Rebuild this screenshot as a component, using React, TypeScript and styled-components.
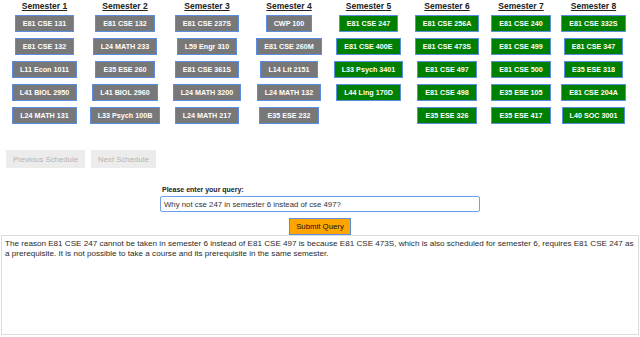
import styled, { createGlobalStyle } from 'styled-components'

const GlobalStyle = createGlobalStyle`
  html, body {
    margin: 0;
    padding: 0;
    background: #ffffff;
  }
  body {
    font-family: "Liberation Sans", Arial, Helvetica, sans-serif;
    color: #222;
  }
`

const semesters: { name: string; status: 'done' | 'planned'; courses: string[] }[] = [
  { name: 'Semester 1', status: 'done', courses: ['E81 CSE 131', 'E81 CSE 132', 'L11 Econ 1011', 'L41 BIOL 2950', 'L24 MATH 131'] },
  { name: 'Semester 2', status: 'done', courses: ['E81 CSE 132', 'L24 MATH 233', 'E35 ESE 260', 'L41 BIOL 2960', 'L33 Psych 100B'] },
  { name: 'Semester 3', status: 'done', courses: ['E81 CSE 237S', 'L59 Engr 310', 'E81 CSE 361S', 'L24 MATH 3200', 'L24 MATH 217'] },
  { name: 'Semester 4', status: 'done', courses: ['CWP 100', 'E81 CSE 260M', 'L14 Lit 2151', 'L24 MATH 132', 'E35 ESE 232'] },
  { name: 'Semester 5', status: 'planned', courses: ['E81 CSE 247', 'E81 CSE 400E', 'L33 Psych 3401', 'L44 Ling 170D'] },
  { name: 'Semester 6', status: 'planned', courses: ['E81 CSE 256A', 'E81 CSE 473S', 'E81 CSE 497', 'E81 CSE 498', 'E35 ESE 326'] },
  { name: 'Semester 7', status: 'planned', courses: ['E81 CSE 240', 'E81 CSE 499', 'E81 CSE 500', 'E35 ESE 105', 'E35 ESE 417'] },
  { name: 'Semester 8', status: 'planned', courses: ['E81 CSE 332S', 'E81 CSE 347', 'E35 ESE 318', 'E81 CSE 204A', 'L40 SOC 3001'] },
]

const Page = styled.div`
  display: flex;
  flex-direction: column;
  width: 640px;
  padding-top: 1px;
`

// columns are sized by the original layout, not evenly
const Schedule = styled.div`
  display: grid;
  grid-template-columns: 80px 81px 83px 81px 78px 79px 69px 76px;
  align-items: start;
  padding-left: 4.5px;
`

const SemesterColumn = styled.div`
  display: flex;
  flex-direction: column;
  align-items: center;
  gap: 6px;
`

const SemesterTitle = styled.div`
  font-size: 8.5px;
  line-height: 10px;
  font-weight: bold;
  text-decoration: underline;
  color: #222;
  margin-bottom: -2px;
`

const CourseButton = styled.div<{ status: 'done' | 'planned' }>`
  box-sizing: border-box;
  height: 17px;
  padding: 0 7px;
  display: flex;
  align-items: center;
  font-size: 7.2px;
  font-weight: bold;
  white-space: nowrap;
  color: #ffffff;
  border: 1px solid #5b8ee0;
  background: ${({ status }) => (status === 'done' ? '#787878' : '#008000')};
`

const NavRow = styled.div`
  display: flex;
  gap: 6px;
  padding-left: 6px;
  margin-top: 26px;
`

const NavButton = styled.button`
  height: 18px;
  padding: 0 7px;
  border: none;
  background: #ececec;
  color: #b4b4b4;
  font-family: inherit;
  font-size: 7.8px;
`

const QueryForm = styled.div`
  display: flex;
  flex-direction: column;
  align-items: center;
  margin-top: 18px;
`

const QueryBlock = styled.div`
  display: flex;
  flex-direction: column;
  width: 320px;
`

const QueryLabel = styled.label`
  font-size: 7px;
  line-height: 8px;
  font-weight: bold;
  color: #222;
  padding-left: 2px;
  margin-bottom: 2px;
`

const QueryInput = styled.input`
  box-sizing: border-box;
  width: 320px;
  height: 16px;
  padding: 0 3px;
  border: 1px solid #6f9fe6;
  border-radius: 2px;
  outline: none;
  font-family: inherit;
  font-size: 7.8px;
  color: #333;
`

const SubmitButton = styled.button`
  box-sizing: border-box;
  margin-top: 6px;
  height: 17px;
  padding: 0 6px;
  background: #ffa500;
  border: 1px solid #5b8ee0;
  color: #111;
  font-family: inherit;
  font-size: 7.8px;
`

const AnswerBox = styled.div`
  box-sizing: border-box;
  margin: 0 1px 0 1px;
  height: 100px;
  padding: 3px 3px;
  border: 1px solid #dcdcdc;
  font-size: 8.1px;
  line-height: 10px;
  color: #2a2a2a;
`

export default function App() {
  return (
    <>
      <GlobalStyle />
      <Page>
        <Schedule>
          {semesters.map((s) => (
            <SemesterColumn key={s.name}>
              <SemesterTitle>{s.name}</SemesterTitle>
              {s.courses.map((c) => (
                <CourseButton key={c} status={s.status}>
                  {c}
                </CourseButton>
              ))}
            </SemesterColumn>
          ))}
        </Schedule>
        <NavRow>
          <NavButton disabled>Previous Schedule</NavButton>
          <NavButton disabled>Next Schedule</NavButton>
        </NavRow>
        <QueryForm>
          <QueryBlock>
            <QueryLabel>Please enter your query:</QueryLabel>
            <QueryInput defaultValue="Why not cse 247 in semester 6 instead of cse 497?" />
          </QueryBlock>
          <SubmitButton>Submit Query</SubmitButton>
        </QueryForm>
        <AnswerBox>
          The reason E81 CSE 247 cannot be taken in semester 6 instead of E81 CSE 497 is because E81 CSE 473S, which is also
          scheduled for semester 6, requires E81 CSE 247 as a prerequisite. It is not possible to take a course and its
          prerequisite in the same semester.
        </AnswerBox>
      </Page>
    </>
  )
}
